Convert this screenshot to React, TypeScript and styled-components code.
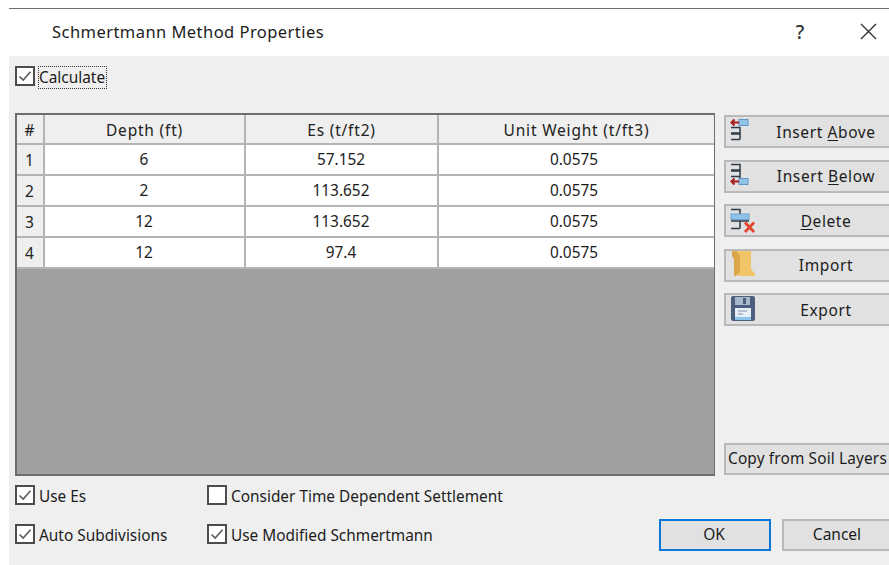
import React from 'react';
import styled, { createGlobalStyle } from 'styled-components';

const GlobalStyle = createGlobalStyle`
  html, body {
    margin: 0;
    padding: 0;
    background: #fff;
  }
  body {
    font-family: "Noto Sans", "Open Sans", sans-serif;
    font-size: 16px;
    color: #1c1c1c;
  }
`;

const Page = styled.div`
  width: 889px;
  height: 565px;
  overflow: hidden;
  padding: 8px 0 0 9px;
  box-sizing: border-box;
  display: flex;
  flex-direction: column;
`;

const TitleBar = styled.div`
  height: 48px;
  flex: none;
  border-top: 1px solid #6f6f6f;
  background: #fff;
  display: flex;
  align-items: center;
  padding: 0 0 2px 43px;
  box-sizing: border-box;
`;

const Title = styled.div`
  flex: 1;
  font-size: 16.5px;
  letter-spacing: 0.45px;
`;

const HelpGlyph = styled.div`
  width: 20px;
  margin-right: 50px;
  font-size: 19px;
  font-weight: 500;
  text-align: center;
  color: #333;
`;

const CloseButton = styled.svg`
  width: 17px;
  height: 17px;
  margin-right: 12px;
`;

const Body = styled.div`
  flex: 1;
  background: #efefef;
  padding: 8px 0 0 6px;
  display: flex;
  flex-direction: column;
  min-height: 0;
`;

const CheckRow = styled.label`
  display: flex;
  align-items: center;
  gap: 4px;
  height: 24px;
  box-sizing: border-box;
  padding-top: 2px;
  font-size: 15.4px;
  white-space: nowrap;
`;

const Box = styled.span`
  width: 16px;
  height: 16px;
  flex: none;
  margin-bottom: 2px;
  border: 2px solid #4d4d4d;
  background: #fff;
  display: flex;
`;

const FocusLabel = styled.span`
  outline: 1px dotted #333;
  line-height: 21px;
  padding: 0 1px 0 0;
`;

const Middle = styled.div`
  display: flex;
  margin-top: 25px;
  gap: 9px;
  height: 363px;
  flex: none;
`;

const GridFrame = styled.div`
  width: 700px;
  flex: none;
  height: 363px;
  box-sizing: border-box;
  border: 2px solid #6e6e6e;
  border-right-width: 1px;
  background: #a0a0a0;
`;

const GridRows = styled.div`
  display: grid;
  grid-template-columns: 28px 201px 193px 1fr;
  grid-template-rows: 30px;
  grid-auto-rows: 31px;
`;

const HeadCell = styled.div`
  background: #efefef;
  border-right: 2px solid #b4b4b4;
  border-bottom: 2px solid #b4b4b4;
  display: flex;
  align-items: center;
  justify-content: center;
  box-sizing: border-box;
  padding-top: 1px;
  font-size: 15.5px;
  letter-spacing: 0.8px;
  color: #222;
  &:nth-child(4) {
    border-right: none;
  }
`;

const RowHead = styled(HeadCell)`
  letter-spacing: 0;
  padding: 0 1px 0 0;
`;

const Cell = styled.div<{ $last?: boolean }>`
  background: #fff;
  border-right: ${p => (p.$last ? 'none' : '2px solid #b4b4b4')};
  border-bottom: 2px solid #b4b4b4;
  display: flex;
  align-items: center;
  justify-content: center;
  font-size: 15.4px;
  padding: 0 ${p => (p.$last ? '5px' : '1px')} 0 0;
  box-sizing: border-box;
`;

const SideColumn = styled.div`
  flex: none;
  width: 200px;
  display: flex;
  flex-direction: column;
  gap: 11.5px;
  padding-top: 2px;
`;

const SideButton = styled.button`
  width: 100%;
  height: 33px;
  padding: 0 0 0 4px;
  box-sizing: border-box;
  background: #e1e1e1;
  border: 2px solid #b9b9b9;
  font-family: inherit;
  font-size: 15.5px;
  letter-spacing: 0.6px;
  color: #1c1c1c;
  display: grid;
  grid-template-columns: 1fr auto 1fr;
  align-items: center;
`;

const IconSlot = styled.span`
  display: flex;
  justify-self: start;
  margin-top: -2px;
`;

const Underlined = styled.span`
  text-decoration: underline;
  text-underline-offset: 2px;
`;

const CopyButton = styled.button`
  margin-top: auto;
  margin-bottom: 1px;
  width: 100%;
  height: 32px;
  padding: 0 0 2px 2px;
  box-sizing: border-box;
  background: #e1e1e1;
  border: 2px solid #b9b9b9;
  font-family: inherit;
  font-size: 15.4px;
  letter-spacing: 0.15px;
  color: #1c1c1c;
  text-align: left;
  white-space: nowrap;
`;

const Footer = styled.div`
  display: flex;
  margin-top: 7px;
`;

const OptionColumn = styled.div<{ $width: number }>`
  width: ${p => p.$width}px;
  flex: none;
  display: flex;
  flex-direction: column;
  gap: 15px;
`;

const Actions = styled.div`
  display: flex;
  align-items: flex-start;
  gap: 11px;
  margin-left: 229px;
  padding-top: 36px;
`;

const DialogButton = styled.button<{ $primary?: boolean }>`
  width: 112px;
  height: 32px;
  flex: none;
  box-sizing: border-box;
  padding: 0 2px 2px 0;
  background: #e1e1e1;
  border: 2px solid ${p => (p.$primary ? '#0a78d7' : '#b9b9b9')};
  font-family: inherit;
  font-size: 15.5px;
  color: #1c1c1c;
`;

const Tick = () => (
  <svg width="16" height="16" viewBox="0 0 16 16">
    <path d="M2.5 8.5 L6.2 12 L13.5 3.8" fill="none" stroke="#5c5c5c" strokeWidth="1.6" />
  </svg>
);

const Check = ({ checked, children }: { checked: boolean; children: React.ReactNode }) => (
  <CheckRow>
    <Box>{checked && <Tick />}</Box>
    {children}
  </CheckRow>
);

// Toolbar-style glyphs for the row actions, drawn on a 26px square
const InsertAboveIcon = () => (
  <svg width="26" height="26" viewBox="0 0 26 26">
    <rect x="9" y="1.5" width="9" height="6" fill="#8fc3ea" stroke="#5f97c8" />
    <path d="M9 4.5H1.5M4.5 1.5L1.5 4.5L4.5 7.5" fill="none" stroke="#a51c1c" strokeWidth="2" />
    <path d="M1 9.5H10V15H1M1 16H10M1 21.5H10M10 9.5V21.5" fill="none" stroke="#2d3a48" strokeWidth="1.5" />
  </svg>
);

const InsertBelowIcon = () => (
  <svg width="26" height="26" viewBox="0 0 26 26">
    <path d="M1 2.5H10V8H1M1 9H10M1 14.5H10M10 2.5V16" fill="none" stroke="#2d3a48" strokeWidth="1.5" />
    <rect x="9" y="16.5" width="9" height="6" fill="#8fc3ea" stroke="#5f97c8" />
    <path d="M9 19.5H1.5M4.5 16.5L1.5 19.5L4.5 22.5" fill="none" stroke="#a51c1c" strokeWidth="2" />
  </svg>
);

const DeleteIcon = () => (
  <svg width="26" height="26" viewBox="0 0 26 26">
    <path d="M1 2.5H10V7M1 14H19M10 14V21.5M1 21.5H10" fill="none" stroke="#2d3a48" strokeWidth="1.5" />
    <rect x="1" y="7" width="18" height="5.5" fill="#8fc3ea" stroke="#6ca3cf" />
    <path d="M15 15.5L24 25M24 15.5L15 25" stroke="#e2452f" strokeWidth="2.8" />
  </svg>
);

const FolderIcon = () => (
  <svg width="26" height="26" viewBox="0 0 26 26">
    <path d="M4 0H21V18L25 23V25H10L8 25Z" fill="#f2c468" />
    <path d="M2 0H6L10 4V21L6 25H4V8L2 5Z" fill="#dba548" />
  </svg>
);

const FloppyIcon = () => (
  <svg width="26" height="26" viewBox="0 0 26 26">
    <rect x="1" y="0" width="24" height="25" rx="2" fill="#4c5f7e" />
    <rect x="5" y="1" width="15" height="8" fill="#aab8cc" />
    <rect x="13" y="2" width="3" height="6" fill="#4c5f7e" />
    <rect x="5" y="12" width="16" height="12" fill="#e8eef6" />
    <rect x="5" y="21" width="16" height="3" fill="#8cc4ee" />
    <path d="M8 15H17M8 18H13" stroke="#7f93ad" strokeWidth="1.2" />
  </svg>
);

const rows = [
  ['1', '6', '57.152', '0.0575'],
  ['2', '2', '113.652', '0.0575'],
  ['3', '12', '113.652', '0.0575'],
  ['4', '12', '97.4', '0.0575'],
];

export default function App() {
  return (
    <>
      <GlobalStyle />
      <Page>
        <TitleBar>
          <Title>Schmertmann Method Properties</Title>
          <HelpGlyph>?</HelpGlyph>
          <CloseButton viewBox="0 0 17 17">
            <path d="M1 1L16 16M16 1L1 16" stroke="#333" strokeWidth="1.4" />
          </CloseButton>
        </TitleBar>
        <Body>
          <Check checked>
            <FocusLabel>Calculate</FocusLabel>
          </Check>
          <Middle>
            <GridFrame>
              <GridRows>
                <HeadCell>#</HeadCell>
                <HeadCell>Depth (ft)</HeadCell>
                <HeadCell>Es (t/ft2)</HeadCell>
                <HeadCell>Unit Weight (t/ft3)</HeadCell>
                {rows.map(([n, depth, es, weight]) => (
                  <React.Fragment key={n}>
                    <RowHead>{n}</RowHead>
                    <Cell>{depth}</Cell>
                    <Cell>{es}</Cell>
                    <Cell $last>{weight}</Cell>
                  </React.Fragment>
                ))}
              </GridRows>
            </GridFrame>
            <SideColumn>
              <SideButton>
                <IconSlot><InsertAboveIcon /></IconSlot>
                <span>Insert <Underlined>A</Underlined>bove</span>
              </SideButton>
              <SideButton>
                <IconSlot><InsertBelowIcon /></IconSlot>
                <span>Insert <Underlined>B</Underlined>elow</span>
              </SideButton>
              <SideButton>
                <IconSlot><DeleteIcon /></IconSlot>
                <span><Underlined>D</Underlined>elete</span>
              </SideButton>
              <SideButton>
                <IconSlot><FolderIcon /></IconSlot>
                <span>Import</span>
              </SideButton>
              <SideButton>
                <IconSlot><FloppyIcon /></IconSlot>
                <span>Export</span>
              </SideButton>
              <CopyButton>Copy from Soil Layers</CopyButton>
            </SideColumn>
          </Middle>
          <Footer>
            <OptionColumn $width={192}>
              <Check checked>Use Es</Check>
              <Check checked>Auto Subdivisions</Check>
            </OptionColumn>
            <OptionColumn $width={223}>
              <Check checked={false}>Consider Time Dependent Settlement</Check>
              <Check checked>Use Modified Schmertmann</Check>
            </OptionColumn>
            <Actions>
              <DialogButton $primary>OK</DialogButton>
              <DialogButton>Cancel</DialogButton>
            </Actions>
          </Footer>
        </Body>
      </Page>
    </>
  );
}
